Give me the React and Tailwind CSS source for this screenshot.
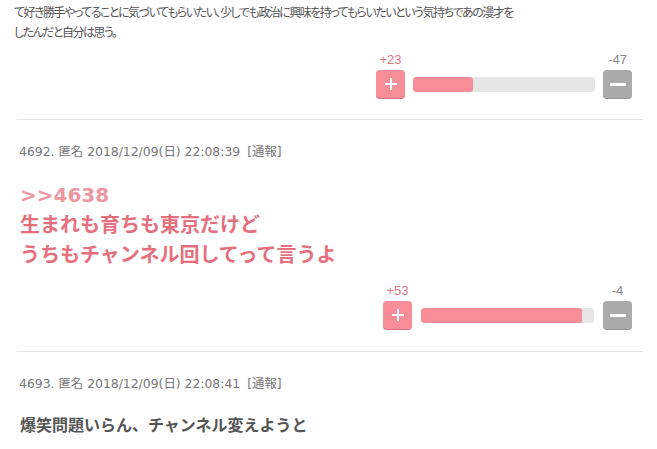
import React from "react";

function PlusBtn() {
  return (
    <div className="w-[29px] h-[28px] rounded-[4px] bg-[#f78d99] shadow-[0_1px_0_#d9727f] flex items-center justify-center">
      <svg width="14" height="14" viewBox="0 0 14 14">
        <path d="M7 1v12M1 7h12" stroke="#fff" strokeWidth="2" strokeLinecap="butt" />
      </svg>
    </div>
  );
}

function MinusBtn() {
  return (
    <div className="w-[29px] h-[28px] rounded-[4px] bg-[#aaaaaa] shadow-[0_1px_0_#959595] flex items-center justify-center">
      <div className="w-[16px] h-[3px] rounded-[1px] bg-white" />
    </div>
  );
}

function Vote({ plus, minus, barW, gapCls }) {
  const pct = (plus / (plus + minus)) * 100;
  return (
    <div className="flex justify-end">
      <div className="flex flex-col">
        <div className="flex justify-between h-[16px] leading-[16px] text-[13px] font-['Liberation_Sans',sans-serif]">
          <span className="w-[29px] text-center text-[#e07784]">+{plus}</span>
          <span className="w-[29px] text-center text-[#888888]">-{minus}</span>
        </div>
        <div className={"mt-[2px] flex items-center " + gapCls}>
          <PlusBtn />
          <div className="h-[15px] rounded-[3px] bg-[#e6e6e6] overflow-hidden" style={{ width: barW }}>
            <div className="h-full bg-[#f78d99] rounded-[3px]" style={{ width: pct + "%" }} />
          </div>
          <MinusBtn />
        </div>
      </div>
    </div>
  );
}

function Meta({ text }) {
  return (
    <div className="pl-[2px] h-[18px] leading-[18px] text-[12.4px] text-[#777777] font-['DejaVu_Sans','Noto_Sans_CJK_JP',sans-serif]">
      {text}
      <span className="ml-[7px]">[通報]</span>
    </div>
  );
}

export default function App() {
  return (
    <div className="w-[657px] h-[449px] overflow-hidden bg-white font-['Noto_Sans_CJK_JP',sans-serif]">
      <div className="mt-[2px] pl-[14px] pr-[20px] text-[12px] leading-[20px] tracking-[-1.5px] text-[#555555] [font-feature-settings:'palt']">
        <p className="whitespace-nowrap">て好き勝手やってることに気づいてもらいたい、少しでも政治に興味を持ってもらいたいという気持ちであの漫才を</p>
        <p>したんだと自分は思う。</p>
      </div>
      <div className="mt-[10px] pr-[25px]">
        <Vote plus={23} minus={47} barW={182} gapCls="gap-[8px]" />
      </div>

      <div className="mt-[21px] ml-[17px] w-[626px] border-t border-[#e4e4e4] pt-[23px] pr-[11px] pb-[22px]">
        <Meta text={"4692. 匿名 2018/12/09(日) 22:08:39"} />
        <div className="mt-[19px] pl-[3px] text-[20px] leading-[30px] font-bold text-[#e66f7e] font-['DejaVu_Sans','Noto_Sans_CJK_JP',sans-serif]">
          <p className="text-[#ec96a1]">&gt;&gt;4638</p>
          <p>生まれも育ちも東京だけど</p>
          <p>うちもチャンネル回してって言うよ</p>
        </div>
        <div className="mt-[13px]">
          <Vote plus={53} minus={4} barW={173} gapCls="gap-[9px]" />
        </div>
      </div>

      <div className="ml-[17px] w-[626px] border-t border-[#e4e4e4] pt-[23px]">
        <Meta text={"4693. 匿名 2018/12/09(日) 22:08:41"} />
        <p className="mt-[19px] pl-[3px] text-[16px] leading-[24px] font-bold text-[#555555]">
          爆笑問題いらん、チャンネル変えようと
        </p>
      </div>
    </div>
  );
}
